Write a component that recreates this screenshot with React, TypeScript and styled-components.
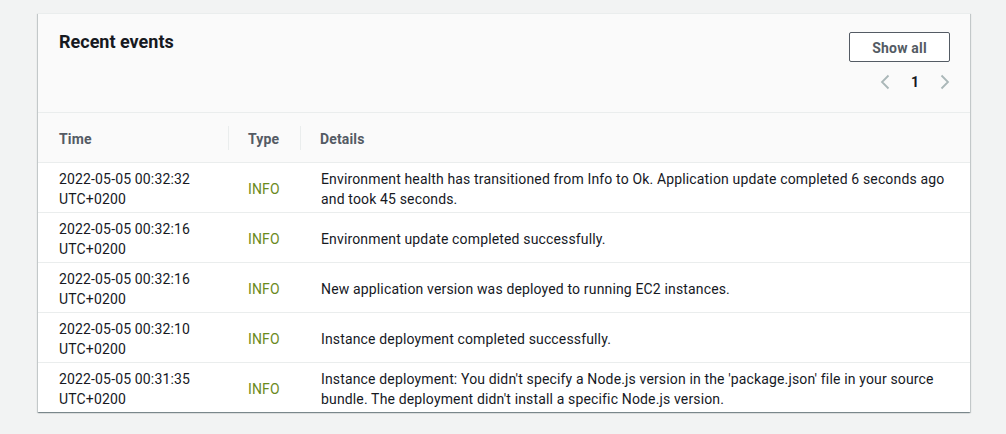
import React from "react";
import styled, { createGlobalStyle } from "styled-components";

const GlobalStyle = createGlobalStyle`
  html, body {
    margin: 0;
    padding: 0;
    background: #f2f3f3;
    font-family: Roboto, "Open Sans", sans-serif;
    color: #16191f;
  }
`;

const Page = styled.div`
  padding: 13px 36px 22px 38px;
`;

const Card = styled.section`
  background: #fff;
  border-top: 1px solid #eaeded;
  box-shadow: 0 1px 1px 0 rgba(0, 28, 36, 0.3), 1px 1px 1px 0 rgba(0, 28, 36, 0.15),
    -1px 1px 1px 0 rgba(0, 28, 36, 0.15);
`;

const Header = styled.header`
  display: flex;
  justify-content: space-between;
  align-items: flex-start;
  height: 99px;
  box-sizing: border-box;
  padding: 17px 20px 0 21px;
  background: #fafafa;
  border-bottom: 1px solid #eaeded;
`;

const Title = styled.h2`
  margin: 0;
  font-size: 18px;
  font-weight: 700;
  line-height: 22px;
`;

const Actions = styled.div`
  display: flex;
  flex-direction: column;
  align-items: flex-end;
  gap: 8px;
  padding-top: 1px;
`;

const Button = styled.button`
  width: 101px;
  height: 30px;
  padding-top: 2px;
  border: 1px solid #545b64;
  border-radius: 2px;
  background: #fff;
  color: #545b64;
  font-family: inherit;
  font-size: 14px;
  font-weight: 700;
  letter-spacing: 0.2px;
  cursor: pointer;
`;

const Pager = styled.div`
  display: flex;
  align-items: center;
  gap: 21px;
  height: 24px;
`;

const PageNum = styled.span`
  font-size: 14px;
  font-weight: 700;
  color: #16191f;
`;

const Chevron: React.FC<{ dir: "left" | "right" }> = ({ dir }) => (
  <svg width="10" height="16" viewBox="0 0 10 16" fill="none">
    <path
      d={dir === "left" ? "M8.5 1.5 2 8l6.5 6.5" : "M1.5 1.5 8 8l-6.5 6.5"}
      stroke="#aab7b8"
      strokeWidth="1.8"
    />
  </svg>
);

const Table = styled.table`
  width: 100%;
  table-layout: fixed;
  border-collapse: collapse;
  font-size: 14px;
  letter-spacing: 0.15px;
`;

const Col = styled.col<{ $width?: number }>`
  width: ${(p) => (p.$width ? `${p.$width}px` : "auto")};
`;

const HeadCell = styled.th<{ $divider?: boolean }>`
  position: relative;
  box-sizing: border-box;
  height: 49px;
  padding: 4px 20px 0 ${(p) => (p.$divider ? 20 : 21)}px;
  text-align: left;
  font-weight: 700;
  color: #545b64;
  background: #fafafa;
  border-bottom: 1px solid #eaeded;

  &::before {
    content: "";
    display: ${(p) => (p.$divider ? "block" : "none")};
    position: absolute;
    left: 0;
    top: 13px;
    bottom: 12px;
    border-left: 1px solid #eaeded;
  }
`;

const Cell = styled.td<{ $tone?: "info" }>`
  box-sizing: border-box;
  height: 50px;
  padding: 3px 20px 0 ${(p) => (p.$tone ? 20 : 21)}px;
  line-height: 20px;
  vertical-align: middle;
  color: ${(p) => (p.$tone === "info" ? "#6b8a1c" : "#16191f")};
  border-bottom: 1px solid #eaeded;
`;

const Row = styled.tr`
  &:last-child td {
    border-bottom: none;
  }
`;

const events = [
  {
    time: "2022-05-05 00:32:32",
    details:
      "Environment health has transitioned from Info to Ok. Application update completed 6 seconds ago and took 45 seconds.",
  },
  { time: "2022-05-05 00:32:16", details: "Environment update completed successfully." },
  {
    time: "2022-05-05 00:32:16",
    details: "New application version was deployed to running EC2 instances.",
  },
  { time: "2022-05-05 00:32:10", details: "Instance deployment completed successfully." },
  {
    time: "2022-05-05 00:31:35",
    details:
      "Instance deployment: You didn't specify a Node.js version in the 'package.json' file in your source bundle. The deployment didn't install a specific Node.js version.",
  },
];

const App: React.FC = () => (
  <>
    <GlobalStyle />
    <Page>
      <Card>
        <Header>
          <Title>Recent events</Title>
          <Actions>
            <Button>Show all</Button>
            <Pager>
              <Chevron dir="left" />
              <PageNum>1</PageNum>
              <Chevron dir="right" />
            </Pager>
          </Actions>
        </Header>
        <Table>
          <colgroup>
            <Col $width={190} />
            <Col $width={72} />
            <Col />
          </colgroup>
          <thead>
            <tr>
              <HeadCell>Time</HeadCell>
              <HeadCell $divider>Type</HeadCell>
              <HeadCell $divider>Details</HeadCell>
            </tr>
          </thead>
          <tbody>
            {events.map((e, i) => (
              <Row key={i}>
                <Cell>
                  {e.time}
                  <br />
                  UTC+0200
                </Cell>
                <Cell $tone="info">INFO</Cell>
                <Cell>{e.details}</Cell>
              </Row>
            ))}
          </tbody>
        </Table>
      </Card>
    </Page>
  </>
);

export default App;
